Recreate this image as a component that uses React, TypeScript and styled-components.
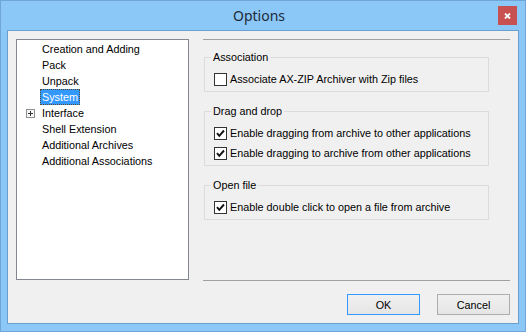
import React from 'react';
import styled, { createGlobalStyle } from 'styled-components';

const GlobalStyle = createGlobalStyle`
  html, body {
    margin: 0;
    padding: 0;
    background: #8bc7f7;
  }
  body {
    font-family: "Liberation Sans", Arial, sans-serif;
    font-size: 10.8px;
    color: #000;
  }
`;

// Window frame
const Window = styled.div`
  width: 526px;
  height: 332px;
  box-sizing: border-box;
  border: 1px solid #6fa5d9;
  background: #8bc7f7;
  display: flex;
  flex-direction: column;
`;

const TitleBar = styled.div`
  height: 29px;
  flex: none;
  display: grid;
  grid-template-columns: 1fr auto 1fr;
  padding-right: 8px;
`;

const Title = styled.div`
  grid-column: 2;
  font-family: "Noto Sans", "Open Sans", sans-serif;
  font-size: 14px;
  line-height: 29px;
  color: #1d2a38;
`;

const CloseButton = styled.div`
  grid-column: 3;
  justify-self: end;
  margin-top: 5px;
  width: 19px;
  height: 19px;
  background: #c75050;
  display: flex;
  align-items: center;
  justify-content: center;
`;

const Client = styled.div`
  flex: 1;
  margin: 0 6px 7px 6px;
  border: 1px solid #6a9fd2;
  background: #f0f0f0;
  padding: 8px;
  display: grid;
  grid-template-columns: 173px 307px;
  grid-template-rows: 242px 21px;
  column-gap: 14px;
  row-gap: 13px;
`;

// Tree view
const Tree = styled.ul`
  margin: 0;
  padding: 1px 0 0;
  list-style: none;
  height: 241px;
  box-sizing: border-box;
  border: 1px solid #828790;
  background: #fff;
`;

const TreeRow = styled.li`
  display: flex;
  align-items: center;
  height: 16px;
`;

const Expander = styled.span`
  width: 23px;
  flex: none;
  display: flex;
  align-items: center;
  padding-left: 9px;
  box-sizing: border-box;
`;

const TreeLabel = styled.span<{ $selected?: boolean }>`
  height: 16px;
  line-height: 14px;
  padding: 0 1px;
  box-sizing: border-box;
  white-space: nowrap;
  border: 1px dotted ${(p) => (p.$selected ? '#5a4a30' : 'transparent')};
  background: ${(p) => (p.$selected ? '#3399ff' : 'transparent')};
  color: ${(p) => (p.$selected ? '#fff' : '#000')};
`;

// Right side
const Panel = styled.div`
  border-top: 1px solid #a0a0a0;
  border-bottom: 1px solid #a0a0a0;
  display: flex;
  flex-direction: column;
`;

const Group = styled.fieldset`
  margin: 12px 0 0 1px;
  width: 285px;
  box-sizing: border-box;
  border: 1px solid #dcdcdc;
  padding: 9px 6px 5px 6px;
  display: flex;
  flex-direction: column;
  gap: 7px;
  &:first-child {
    margin-top: 10px;
  }
  legend {
    padding: 0 2px;
    line-height: 14px;
  }
`;

const CheckRow = styled.label`
  display: flex;
  align-items: center;
  gap: 3px;
  height: 13px;
  line-height: 13px;
  padding-left: 3px;
  white-space: nowrap;
`;

const Box = styled.span`
  width: 13px;
  height: 13px;
  flex: none;
  box-sizing: border-box;
  border: 1px solid #333;
  background: #fff;
  display: flex;
`;

const Buttons = styled.div`
  grid-column: 2;
  display: flex;
  justify-content: flex-end;
  gap: 17px;
`;

const Button = styled.div<{ $default?: boolean }>`
  width: 73px;
  height: 21px;
  box-sizing: border-box;
  border: 1px solid ${(p) => (p.$default ? '#3399ff' : '#adadad')};
  background: linear-gradient(#f0f0f0, #e5e5e5);
  display: flex;
  align-items: center;
  justify-content: center;
`;

const CloseGlyph = () => (
  <svg width="7" height="6" viewBox="0 0 7 6">
    <path d="M1 0.5 L6 5.5 M6 0.5 L1 5.5" stroke="#fff" strokeWidth="1.8" />
  </svg>
);

const PlusBox = () => (
  <svg width="9" height="9" viewBox="0 0 9 9">
    <rect x="0.5" y="0.5" width="8" height="8" fill="#f7f7f7" stroke="#8e8f8f" />
    <path d="M2 4.5 H7 M4.5 2 V7" stroke="#333" />
  </svg>
);

const CheckBox = ({ checked }: { checked?: boolean }) => (
  <Box>
    {checked && (
      <svg width="11" height="11" viewBox="0 0 11 11">
        <path d="M2 5.2 L4.3 7.8 L9 2.5" fill="none" stroke="#111" strokeWidth="1.9" />
      </svg>
    )}
  </Box>
);

const treeItems = [
  { label: 'Creation and Adding' },
  { label: 'Pack' },
  { label: 'Unpack' },
  { label: 'System', selected: true },
  { label: 'Interface', expandable: true },
  { label: 'Shell Extension' },
  { label: 'Additional Archives' },
  { label: 'Additional Associations' },
];

const groups = [
  {
    title: 'Association',
    items: [{ text: 'Associate AX-ZIP Archiver with Zip files', checked: false }],
  },
  {
    title: 'Drag and drop',
    items: [
      { text: 'Enable dragging from archive to other applications', checked: true },
      { text: 'Enable dragging to archive from other applications', checked: true },
    ],
  },
  {
    title: 'Open file',
    items: [{ text: 'Enable double click to open a file from archive', checked: true }],
  },
];

export default function App() {
  return (
    <>
      <GlobalStyle />
      <Window>
        <TitleBar>
          <Title>Options</Title>
          <CloseButton>
            <CloseGlyph />
          </CloseButton>
        </TitleBar>
        <Client>
          <Tree>
            {treeItems.map((item) => (
              <TreeRow key={item.label}>
                <Expander>{item.expandable && <PlusBox />}</Expander>
                <TreeLabel $selected={item.selected}>{item.label}</TreeLabel>
              </TreeRow>
            ))}
          </Tree>
          <Panel>
            {groups.map((g) => (
              <Group key={g.title}>
                <legend>{g.title}</legend>
                {g.items.map((it) => (
                  <CheckRow key={it.text}>
                    <CheckBox checked={it.checked} />
                    {it.text}
                  </CheckRow>
                ))}
              </Group>
            ))}
          </Panel>
          <Buttons>
            <Button $default>OK</Button>
            <Button>Cancel</Button>
          </Buttons>
        </Client>
      </Window>
    </>
  );
}
